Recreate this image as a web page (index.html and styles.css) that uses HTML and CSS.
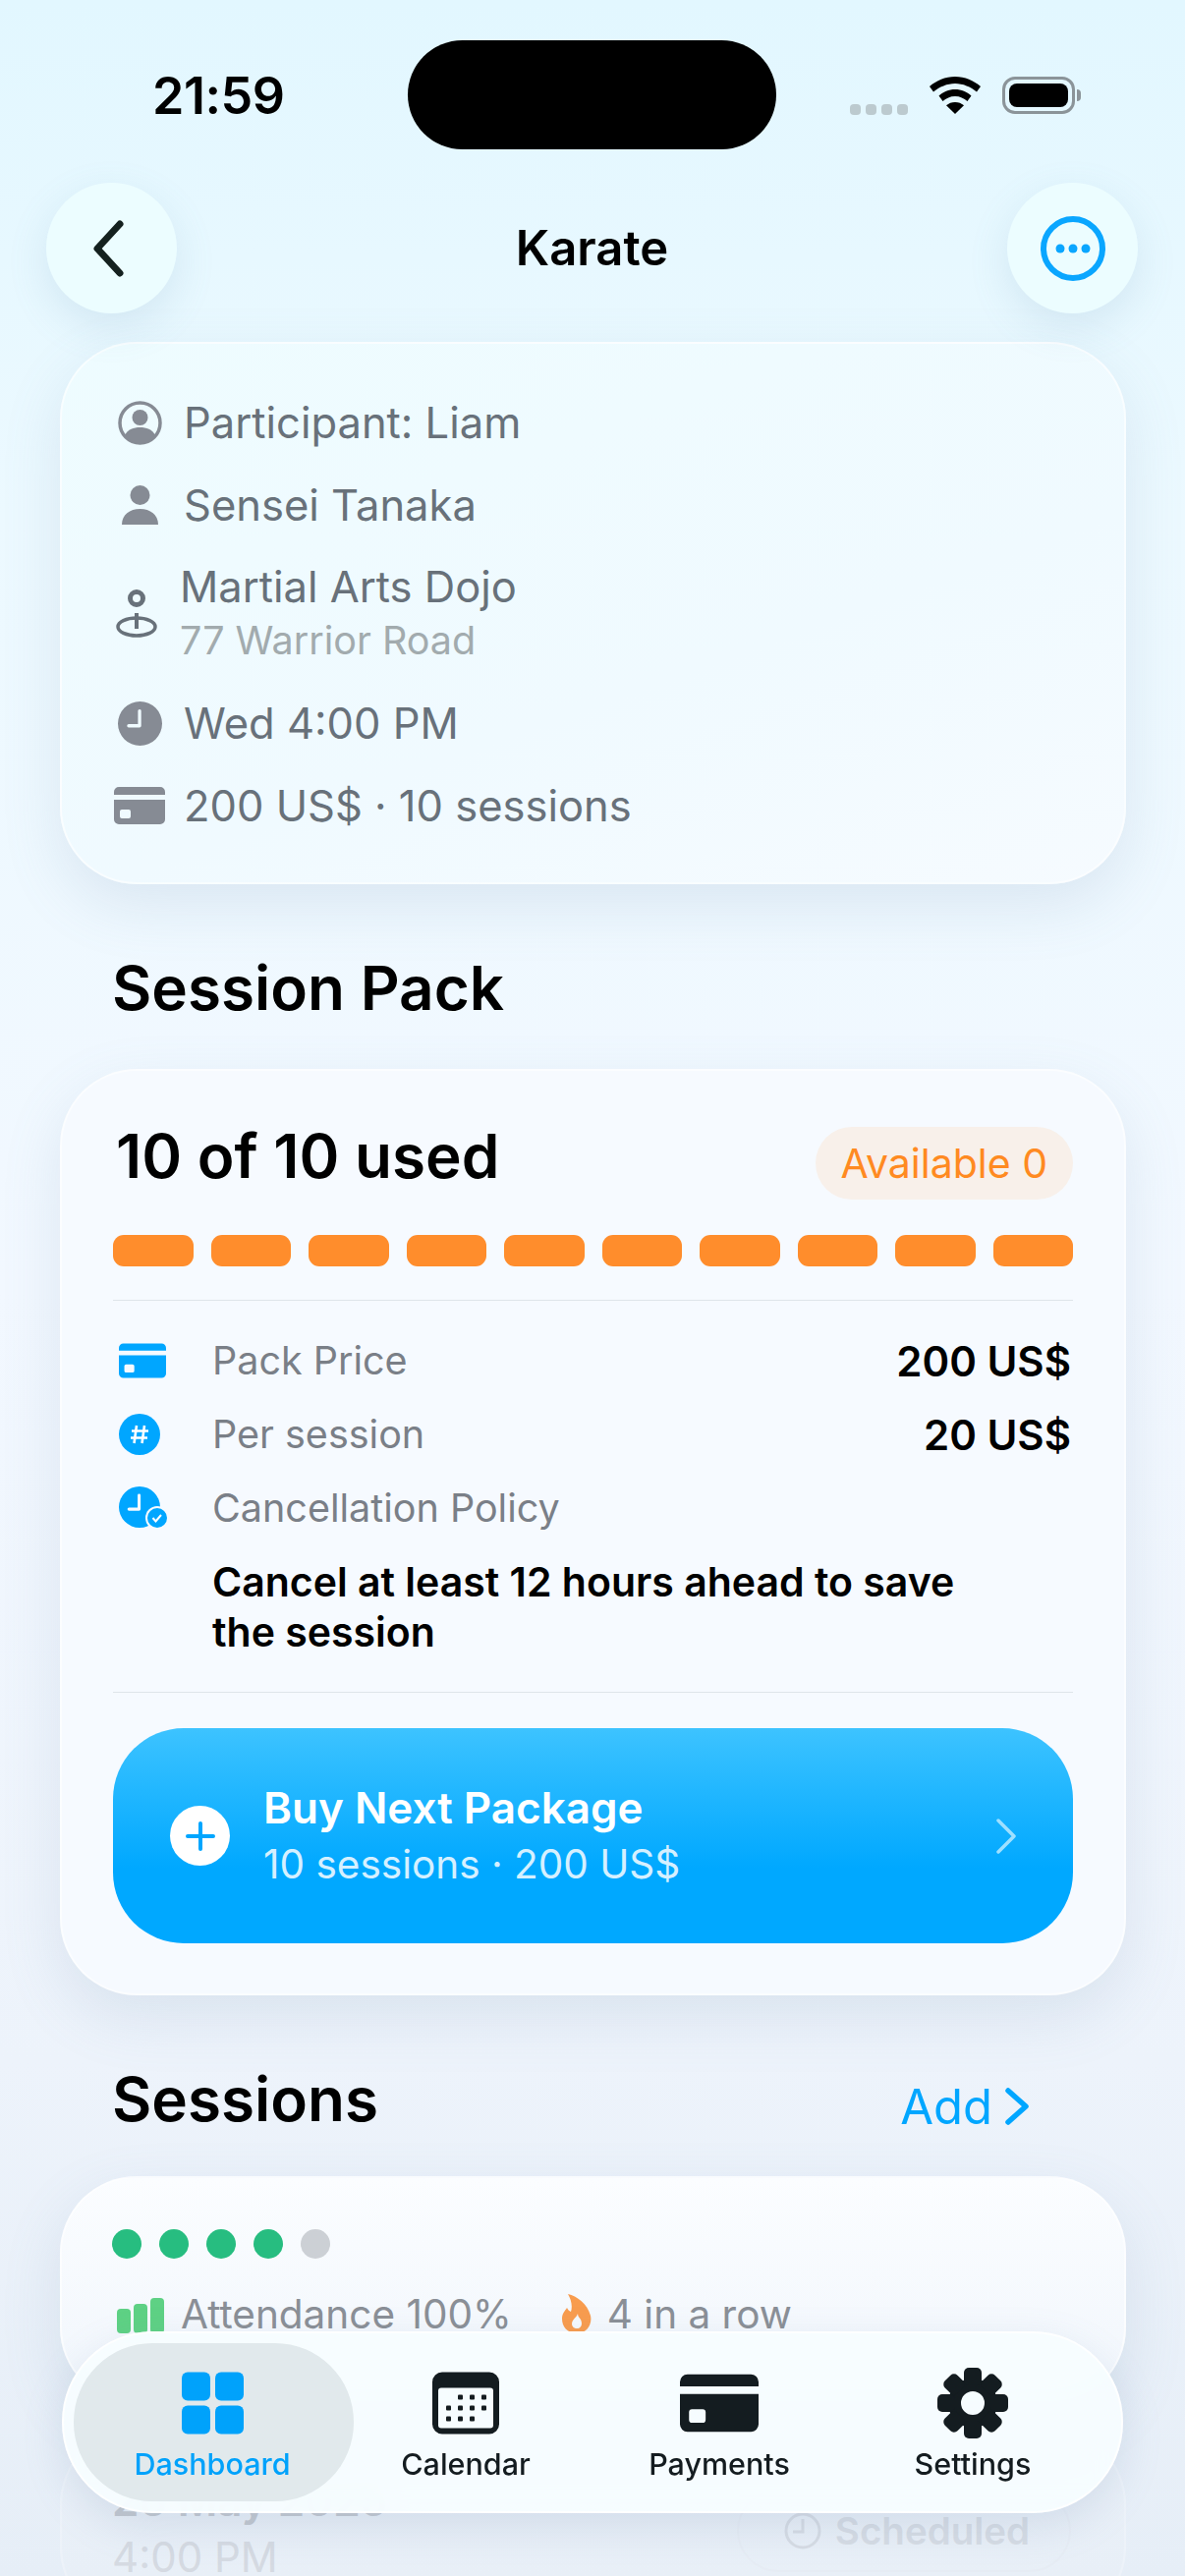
FILE: index.html
```html
<!DOCTYPE html>
<html lang="en">
<head>
  <meta charset="UTF-8">
  <title>Karate</title>
  <meta name="viewport" content="width=device-width, initial-scale=1.0"/>
  <link rel="stylesheet" href="styles.css">
</head>
<body>
  <svg class="defs" width="0" height="0">
    <symbol id="card" viewBox="0 0 52 38">
      <path fill-rule="evenodd" d="M5 0h42a5 5 0 0 1 5 5v3H0V5a5 5 0 0 1 5-5zM0 13h52v20a5 5 0 0 1-5 5H5a5 5 0 0 1-5-5zM8 23a2 2 0 0 0-2 2v5a2 2 0 0 0 2 2h7a2 2 0 0 0 2-2v-5a2 2 0 0 0-2-2z"/>
    </symbol>
    <symbol id="clock" viewBox="0 0 45 45">
      <path fill-rule="evenodd" d="M22.5 0a22.5 22.5 0 1 1 0 45a22.5 22.5 0 0 1 0-45zM22 8a1.6 1.6 0 0 0-1.6 1.6V23H11a1.6 1.6 0 0 0 0 3.4h11a1.7 1.7 0 0 0 1.7-1.7V9.6A1.6 1.6 0 0 0 22 8z"/>
    </symbol>
  </svg>

  <div class="screen">
    <header class="status">
      <span class="time">21:59</span>
      <div class="island"></div>
      <div class="status-icons">
        <div class="signal"><i></i><i></i><i></i><i></i></div>
        <svg class="wifi" viewBox="0 0 52 38"><path d="M26 0c10 0 19 4 26 10l-4 5.500C42 10.500 34 7 26 7S10 10.500 4 15.500L0 10C7 4 16 0 26 0z"/><path d="M26 13c6.500 0 12 2.500 16.500 6.500l-4 5.500C35 22 31 20 26 20s-9 2-12.500 5l-4-5.500C14 15.500 19.500 13 26 13z"/><path d="M26 26c3.500 0 6.500 1.200 9 3.300L26 38l-9-8.700c2.500-2.100 5.500-3.300 9-3.300z"/></svg>
        <div class="battery"><div class="battery-fill"></div></div>
        <div class="battery-tip"></div>
      </div>
    </header>

    <nav class="topnav">
      <button class="round-btn">
        <svg class="back" viewBox="0 0 33 58"><path d="M28 4 5 29l23 25"/></svg>
      </button>
      <h1>Karate</h1>
      <button class="round-btn">
        <svg class="more" viewBox="0 0 66 66"><circle class="ring" cx="33" cy="33" r="30"/><circle cx="20" cy="33" r="4.500"/><circle cx="33" cy="33" r="4.500"/><circle cx="46" cy="33" r="4.500"/></svg>
      </button>
    </nav>

    <section class="card info">
      <div class="info-row">
        <span class="info-icon">
          <svg width="45" height="45" viewBox="0 0 45 45"><circle cx="22.500" cy="22.500" r="20.500" fill="none" stroke="currentColor" stroke-width="3.500"/><circle cx="22.500" cy="17" r="8"/><path d="M7 35c3-6 9-8 15.500-8s12.500 2 15.500 8c-4 5-9.500 8-15.500 8S11 40 7 35z"/></svg>
        </span>
        <span>Participant: Liam</span>
      </div>
      <div class="info-row">
        <span class="info-icon">
          <svg width="37" height="40" viewBox="0 0 37 40"><circle cx="18.500" cy="10" r="10"/><path d="M0 40c0-10 8-16 18.500-16S37 30 37 40z"/></svg>
        </span>
        <span>Sensei Tanaka</span>
      </div>
      <div class="info-row tall">
        <span class="info-icon pin">
          <svg width="42" height="49" viewBox="0 0 42 49"><ellipse cx="21" cy="38" rx="19" ry="9" fill="none" stroke="currentColor" stroke-width="3.500"/><path d="M19 24h4v16h-4z"/><circle cx="21" cy="9" r="6.500" fill="none" stroke="currentColor" stroke-width="5"/></svg>
        </span>
        <div class="place">
          <div>Martial Arts Dojo</div>
          <div class="address">77 Warrior Road</div>
        </div>
      </div>
      <div class="info-row">
        <span class="info-icon"><svg width="45" height="45"><use href="#clock"/></svg></span>
        <span>Wed 4:00 PM</span>
      </div>
      <div class="info-row">
        <span class="info-icon"><svg width="52" height="38"><use href="#card"/></svg></span>
        <span>200 US$ · 10 sessions</span>
      </div>
    </section>

    <h2 class="pack-title">Session Pack</h2>

    <section class="card pack">
      <div class="pack-head">
        <span class="used">10 of 10 used</span>
        <span class="avail">Available 0</span>
      </div>
      <div class="segments">
        <i></i><i></i><i></i><i></i><i></i><i></i><i></i><i></i><i></i><i></i>
      </div>
      <hr>
      <div class="pack-rows">
        <div class="pack-row">
          <span class="pack-icon"><svg width="48" height="36"><use href="#card"/></svg></span>
          <span class="label">Pack Price</span>
          <b>200 US$</b>
        </div>
        <div class="pack-row">
          <span class="pack-icon">
            <svg width="42" height="42" viewBox="0 0 42 42"><circle cx="21" cy="21" r="21"/><path d="M18 12l-2.500 18M26 12l-2.500 18M13 17.500h17M12 24.500h17" stroke="#fff" stroke-width="2.600" fill="none"/></svg>
          </span>
          <span class="label">Per session</span>
          <b>20 US$</b>
        </div>
        <div class="pack-row">
          <span class="pack-icon">
            <svg width="50" height="44" viewBox="0 0 50 44"><use href="#clock" width="42" height="42"/><circle cx="39" cy="32" r="12" fill="#f5faff"/><circle cx="39" cy="32" r="10"/><path d="M34.500 32l3 3.500 5.500-6.500" stroke="#fff" stroke-width="2" fill="none"/></svg>
          </span>
          <span class="label">Cancellation Policy</span>
        </div>
        <p class="note">Cancel at least 12 hours ahead to save<br>the session</p>
      </div>
      <hr class="low">
      <a class="buy">
        <span class="plus">
          <svg width="32" height="32" viewBox="0 0 32 32"><path d="M16 3v26M3 16h26" stroke="#00a6ff" stroke-width="4" stroke-linecap="round"/></svg>
        </span>
        <span class="buy-text">
          <span class="buy-title">Buy Next Package</span>
          <span class="buy-sub">10 sessions · 200 US$</span>
        </span>
        <svg class="buy-chev" viewBox="0 0 20 36"><path d="M2 2l16 16L2 34"/></svg>
      </a>
    </section>

    <div class="sessions-head">
      <h2>Sessions</h2>
      <a class="add">Add <svg viewBox="0 0 25 38"><path d="M3 3l18 16L3 35"/></svg></a>
    </div>

    <section class="card summary">
      <div class="dots"><i></i><i></i><i></i><i></i><i class="off"></i></div>
      <div class="stats">
        <svg class="bars" width="48" height="36" viewBox="0 0 48 36"><rect y="11" width="14" height="25" rx="4"/><rect x="17" y="6" width="14" height="30" rx="4"/><rect x="34" width="14" height="36" rx="4"/></svg>
        <span>Attendance 100%</span>
        <svg class="flame" width="30" height="40" viewBox="0 0 30 40"><path fill="#f89c4e" fill-rule="evenodd" d="M6 0c9 2 20 10 23 22 2 9-4 18-14 18S0 33 0 25c0-5 3-8 5-11 1 2 2 3 4 4C11 12 9 5 6 0zM16 20c-1 3-3 4-5 7-2 3-1 8 4 8s6-5 4-9c-1-2-3-3-3-6z"/></svg>
        <span>4 in a row</span>
      </div>
    </section>

    <section class="card next">
      <div class="next-text">
        <div class="next-date">26 May 2025</div>
        <div class="next-time">4:00 PM</div>
      </div>
      <div class="scheduled">
        <svg width="38" height="38" viewBox="0 0 38 38"><circle cx="19" cy="19" r="17" fill="none" stroke="currentColor" stroke-width="3"/><path d="M19 7v13H9" fill="none" stroke="currentColor" stroke-width="3"/></svg>
        <span>Scheduled</span>
      </div>
    </section>

    <footer class="tabbar">
      <a class="tab active">
        <svg width="63" height="63" viewBox="0 0 63 63"><rect width="29" height="29" rx="6"/><rect x="34" width="29" height="29" rx="6"/><rect y="34" width="29" height="29" rx="6"/><rect x="34" y="34" width="29" height="29" rx="6"/></svg>
        <span>Dashboard</span>
      </a>
      <a class="tab">
        <svg width="68" height="63" viewBox="0 0 68 63"><path fill-rule="evenodd" d="M10 0h48a10 10 0 0 1 10 10v43a10 10 0 0 1-10 10H10A10 10 0 0 1 0 53V10A10 10 0 0 1 10 0zM9 16a3 3 0 0 0-3 3v35a3 3 0 0 0 3 3h50a3 3 0 0 0 3-3V19a3 3 0 0 0-3-3z"/><g><rect x="26" y="23" width="5" height="5" rx="1"/><rect x="38" y="23" width="5" height="5" rx="1"/><rect x="50" y="23" width="5" height="5" rx="1"/><rect x="14" y="34" width="5" height="5" rx="1"/><rect x="26" y="34" width="5" height="5" rx="1"/><rect x="38" y="34" width="5" height="5" rx="1"/><rect x="50" y="34" width="5" height="5" rx="1"/><rect x="14" y="45" width="5" height="5" rx="1"/><rect x="26" y="45" width="5" height="5" rx="1"/><rect x="38" y="45" width="5" height="5" rx="1"/></g></svg>
        <span>Calendar</span>
      </a>
      <a class="tab">
        <svg class="tab-card" width="80" height="58"><use href="#card"/></svg>
        <span>Payments</span>
      </a>
      <a class="tab">
        <svg width="72" height="72" viewBox="0 0 72 72"><path fill-rule="evenodd" d="M36 11a25 25 0 1 1 0 50a25 25 0 0 1 0-50zM36 24a12 12 0 1 0 0 24a12 12 0 0 0 0-24z"/><g><rect x="27" width="18" height="18" rx="5"/><rect x="27" width="18" height="18" rx="5" transform="rotate(45 36 36)"/><rect x="27" width="18" height="18" rx="5" transform="rotate(90 36 36)"/><rect x="27" width="18" height="18" rx="5" transform="rotate(135 36 36)"/><rect x="27" width="18" height="18" rx="5" transform="rotate(180 36 36)"/><rect x="27" width="18" height="18" rx="5" transform="rotate(225 36 36)"/><rect x="27" width="18" height="18" rx="5" transform="rotate(270 36 36)"/><rect x="27" width="18" height="18" rx="5" transform="rotate(315 36 36)"/></g></svg>
        <span>Settings</span>
      </a>
    </footer>
  </div>
</body>
</html>
```
FILE: styles.css
```css
* {
  box-sizing: border-box;
}
html, body {
  margin: 0;
  padding: 0;
}
body {
  font-family: Inter, "Noto Sans", sans-serif;
  color: #000;
}
.defs {
  position: absolute;
}
.screen {
  position: relative;
  width: 1206px;
  height: 2622px;
  overflow: hidden;
  background: linear-gradient(180deg, #e2f7ff 0%, #ecf9ff 20%, #f2f8ff 50%, #edf3fb 80%, #e6eef7 100%);
}

/* status bar */
.status {
  height: 186px;
  padding: 41px 106px 0 155px;
  display: flex;
  align-items: flex-start;
}
.time {
  width: 260px;
  margin-top: 27px;
  font-size: 52px;
  line-height: 60px;
  font-weight: 600;
  letter-spacing: -.5px;
}
.island {
  width: 375px;
  height: 111px;
  background: #000;
  border-radius: 56px;
}
.status-icons {
  margin-left: 75px;
  margin-top: 37px;
  display: flex;
  align-items: flex-start;
}
.signal {
  display: flex;
  gap: 5px;
  margin-top: 28px;
}
.signal i {
  width: 11px;
  height: 11px;
  border-radius: 4px;
  background: #bccacf;
}
.wifi {
  width: 52px;
  height: 38px;
  margin-left: 22px;
}
.battery {
  width: 74px;
  height: 38px;
  margin-left: 22px;
  padding: 4px;
  border: 3px solid #8b9499;
  border-radius: 13px;
}
.battery-fill {
  height: 100%;
  background: #000;
  border-radius: 8px;
}
.battery-tip {
  width: 4px;
  height: 12px;
  margin: 13px 0 0 2px;
  background: #8b9499;
  border-radius: 0 6px 6px 0;
}

/* top nav */
.topnav {
  height: 133px;
  padding: 0 48px 0 47px;
  display: flex;
  align-items: center;
  justify-content: space-between;
}
.topnav h1 {
  margin: 0;
  font-size: 49px;
  font-weight: 600;
}
.round-btn {
  width: 133px;
  height: 133px;
  padding: 0;
  border: none;
  border-radius: 50%;
  background: #ecfdff;
  box-shadow: 0 14px 40px rgba(100, 150, 180, .16);
  display: flex;
  align-items: center;
  justify-content: center;
}
.back {
  width: 33px;
  height: 58px;
  margin-right: 7px;
  fill: none;
  stroke: #14211f;
  stroke-width: 7;
  stroke-linecap: round;
  stroke-linejoin: round;
}
.more {
  width: 66px;
  height: 66px;
  fill: #0aa6ff;
}
.more .ring {
  fill: none;
  stroke: #0aa6ff;
  stroke-width: 6;
}

/* cards */
.card {
  margin: 0 60px 0 61px;
  border-radius: 78px;
  border: 2px solid rgba(255, 255, 255, .6);
  box-shadow: 0 22px 60px rgba(110, 140, 175, .16);
}
.info {
  margin-top: 29px;
  padding: 50px 53px 48px;
  display: flex;
  flex-direction: column;
  gap: 24px;
  background: linear-gradient(160deg, #eefcff 0%, #f0faff 60%, #f6fbff 100%);
  color: #68717a;
  font-size: 43.500px;
}
.info-row {
  height: 60px;
  display: flex;
  align-items: center;
  gap: 19px;
}
.info-row.tall {
  height: 114px;
}
.info-icon {
  width: 52px;
  display: flex;
  justify-content: center;
  color: #868b94;
  fill: currentColor;
}
.info-icon.pin {
  color: #68717a;
  margin-left: -3px;
  margin-right: -1px;
  margin-top: -1px;
}
.place {
  line-height: 55px;
}
.address {
  color: #a2abae;
  font-size: 39.500px;
}

.pack-title {
  margin: 66px 0 42px 114px;
  font-size: 62px;
  line-height: 80px;
  font-weight: 600;
}
.pack {
  padding: 57px 52px 51px;
  background: #f6faff;
}
.pack-head {
  height: 74px;
  display: flex;
  align-items: center;
  justify-content: space-between;
}
.used {
  margin: 0 0 16px 3px;
  font-size: 62px;
  font-weight: 600;
}
.avail {
  height: 74px;
  padding: 0 26px 0 25px;
  border-radius: 37px;
  background: #f8f0ea;
  color: #ff8a21;
  font-size: 41px;
  line-height: 74px;
}
.segments {
  margin-top: 36px;
  display: flex;
  gap: 18px;
}
.segments i {
  flex: 1;
  height: 32px;
  border-radius: 11px;
  background: #ff8d2c;
}
hr {
  margin: 34px 0 0;
  border: none;
  border-top: 1px solid #dfe5ea;
}
hr.low {
  margin-top: 35px;
}
.pack-rows {
  margin-top: 36px;
}
.pack-row {
  height: 50px;
  margin-bottom: 25px;
  display: flex;
  align-items: center;
  font-size: 39.500px;
}
.pack-icon {
  width: 101px;
  padding-left: 6px;
  display: flex;
  color: #00a6ff;
  fill: currentColor;
}
.label {
  flex: 1;
  color: #7a7f87;
}
.pack-row b {
  margin-right: 2px;
  font-weight: 600;
  font-size: 42px;
}
.note {
  margin: 0 0 0 101px;
  font-size: 41px;
  line-height: 51px;
  font-weight: 600;
}
.buy {
  margin-top: 36px;
  height: 219px;
  padding: 0 32px 0 58px;
  border-radius: 72px;
  background: linear-gradient(180deg, #3dc3ff 0%, #00a8ff 65%);
  display: flex;
  align-items: center;
  color: #fff;
}
.plus {
  width: 61px;
  height: 61px;
  border-radius: 50%;
  background: #fff;
  display: flex;
  align-items: center;
  justify-content: center;
}
.buy-text {
  flex: 1;
  margin: 0 0 0 34px;
  display: flex;
  flex-direction: column;
}
.buy-title {
  font-size: 44px;
  line-height: 58px;
  font-weight: 600;
}
.buy-sub {
  font-size: 40.500px;
  line-height: 58px;
  color: #d5f0ff;
}
.buy-chev {
  width: 20px;
  height: 36px;
  margin-right: 26px;
  fill: none;
  stroke: #9fe0ff;
  stroke-width: 3.500;
  stroke-linecap: round;
  stroke-linejoin: round;
}

.sessions-head {
  margin: 65px 158px 39px 114px;
  height: 80px;
  display: flex;
  align-items: center;
  justify-content: space-between;
}
.sessions-head h2 {
  margin: 0;
  font-size: 62px;
  font-weight: 600;
}
.add {
  margin-top: 16px;
  display: flex;
  align-items: center;
  gap: 13px;
  color: #00a6ff;
  font-size: 49px;
}
.add svg {
  width: 25px;
  height: 38px;
  fill: none;
  stroke: #00a6ff;
  stroke-width: 5.500;
  stroke-linecap: round;
  stroke-linejoin: round;
}

.summary {
  height: 232px;
  padding: 52px 51px 0;
  background: linear-gradient(180deg, #fbfdff 0%, #f1f6fc 100%);
}
.dots {
  display: flex;
  gap: 18px;
}
.dots i {
  width: 30px;
  height: 30px;
  border-radius: 50%;
  background: #27bd80;
}
.dots i.off {
  background: #ccd0d5;
}
.stats {
  margin-top: 31px;
  height: 50px;
  display: flex;
  align-items: center;
  color: #8a8f96;
  font-size: 40.500px;
}
.bars {
  margin: 4px 17px 0 5px;
  fill: #5ed184;
}
.flame {
  margin: 0 16px 0 51px;
}

.next {
  margin-top: 24px;
  height: 200px;
  padding: 42px 54px 0 51px;
  display: flex;
  justify-content: space-between;
  border-color: rgba(255, 255, 255, .2);
  background: rgba(255, 255, 255, .1);
  box-shadow: none;
}
.next-date {
  font-size: 44px;
  line-height: 60px;
  font-weight: 600;
  color: #c3c8cf;
}
.next-time {
  font-size: 42px;
  line-height: 56px;
  color: #d5dae2;
}
.scheduled {
  margin-top: 19px;
  width: 340px;
  height: 84px;
  padding-left: 6px;
  border: 2px solid #e6ecf4;
  border-radius: 42px;
  display: flex;
  align-items: center;
  justify-content: center;
  gap: 14px;
  color: #d6dce4;
  font-size: 38.500px;
  font-weight: 600;
}

/* tab bar */
.tabbar {
  position: absolute;
  left: 63px;
  top: 2373px;
  width: 1080px;
  height: 185px;
  padding: 10px 22px;
  display: grid;
  grid-template-columns: repeat(4, 258px);
  border: 2px solid rgba(255, 255, 255, .8);
  border-radius: 92px;
  background: rgba(246, 253, 255, .94);
  backdrop-filter: blur(12px);
  box-shadow: 0 14px 40px rgba(110, 140, 175, .18);
}
.tab {
  height: 161px;
  padding-top: 25px;
  display: flex;
  flex-direction: column;
  align-items: center;
  color: #141c20;
  fill: #141c20;
  font-size: 30.500px;
  font-weight: 500;
}
.tab svg {
  height: 72px;
  flex: none;
}
.tab span {
  margin-top: 6px;
  line-height: 40px;
}
.tab.active {
  margin: 0 -15px 0 -12px;
  padding-right: 3px;
  border-radius: 80px;
  background: #e1e9ec;
  color: #00a2fb;
  fill: #00a2fb;
}
```
